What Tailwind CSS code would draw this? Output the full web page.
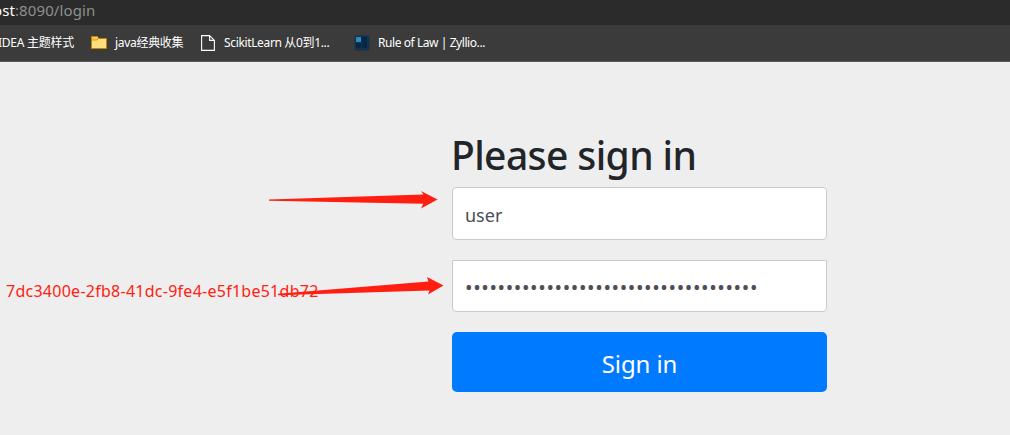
<!DOCTYPE html>
<html lang="en">
<head>
<meta charset="utf-8">
<title>Please sign in</title>
<script src="https://cdn.jsdelivr.net/npm/@tailwindcss/browser@4"></script>
</head>
<body class="relative h-[435px] w-[1010px] overflow-hidden bg-[#eeeeee] font-['Noto_Sans','Noto_Sans_CJK_SC',sans-serif]">
<header>
  <div class="flex h-[25px] items-start overflow-hidden bg-[#2b2b2b] text-[15px] leading-[21px] whitespace-nowrap">
    <div class="-ml-[7px] tracking-[0.1px] text-[#8f8f8f]"><span class="text-white">ost</span>:8090/login</div>
  </div>
  <nav class="flex h-[37px] items-center border-b border-[#5a5a5a] bg-[#3b3b3b] pb-px text-[12px] whitespace-nowrap text-white">
    <div class="-ml-[2px] w-[93px] tracking-[-0.25px]">IDEA 主题样式</div>
    <svg class="mr-2 h-[13px] w-4 shrink-0" viewBox="0 0 16 13"><path d="M.5.5h6l1 2h8v10H.5z" fill="#ffdc7c" stroke="#b8860b"/><path d="M1 1h5.3l.8 1.6L6 4H1z" fill="#ffc83d"/><path d="M.5 4h5.6l1.2-1.5" fill="none" stroke="#b8860b" stroke-width=".7"/></svg>
    <div class="w-[86px] tracking-[-0.3px]">java经典收集</div>
    <svg class="mr-[9px] h-4 w-[14px] shrink-0" viewBox="0 0 14 16" fill="none" stroke="#fff" stroke-width="1.1"><path d="M.6.6h8l4.8 4.8v10H.6zM8.6.6v4.8h4.8"/></svg>
    <div class="w-[130px] tracking-[-0.35px]">ScikitLearn 从0到1...</div>
    <svg class="mr-2 h-4 w-4 shrink-0" viewBox="0 0 16 16"><rect x=".5" y=".5" width="15" height="15" rx="1.5" fill="#16324a"/><path d="M2 2h5v5H2z" fill="#2a8cbe"/><path d="M2 8h5v5H2zM8 2h5v11H8z" fill="#052748"/></svg>
    <div class="tracking-[-0.43px]">Rule of Law | Zyllio...</div>
  </nav>
</header>
<main class="ml-[452px] w-[375px] pt-[69px]">
  <h1 class="-ml-px h-[56px] text-[39px] leading-[48px] font-medium tracking-[-0.6px] whitespace-nowrap text-[#212529]">Please sign in</h1>
  <div class="flex h-[53px] items-center rounded-[4px] border border-[#cacaca] bg-white px-[12px] pt-[3px] text-[18px] text-[#495057]">user</div>
  <div class="mt-5 flex h-[52px] items-center rounded-b-[4px] border border-[#cacaca] bg-white px-[12px] pt-[4px] text-[20px] tracking-[0.62px] whitespace-nowrap text-[#495057]">••••••••••••••••••••••••••••••••••••</div>
  <button class="mt-5 block h-[60px] w-full rounded-[5px] bg-[#007bff] pt-[3px] text-[24px] tracking-[-0.1px] text-white">Sign in</button>
</main>
<div class="absolute top-[280px] left-[6px] text-[16px] leading-[22px] tracking-[0.26px] whitespace-nowrap text-[#ff2211]">7dc3400e-2fb8-41dc-9fe4-e5f1be51db72</div>
<svg class="absolute top-0 left-0" width="1010" height="435" fill="#ff1e0f"><path d="M269 199.6 423.5 194.6 421 191 437.5 199.5 421 208.5 423.3 203.8 269 200.8z"/><path d="M278 293.8 428.5 281.5 427 277 443.5 285.5 428 294.5 429.5 290.5 278 295.2z"/></svg>
</body>
</html>
